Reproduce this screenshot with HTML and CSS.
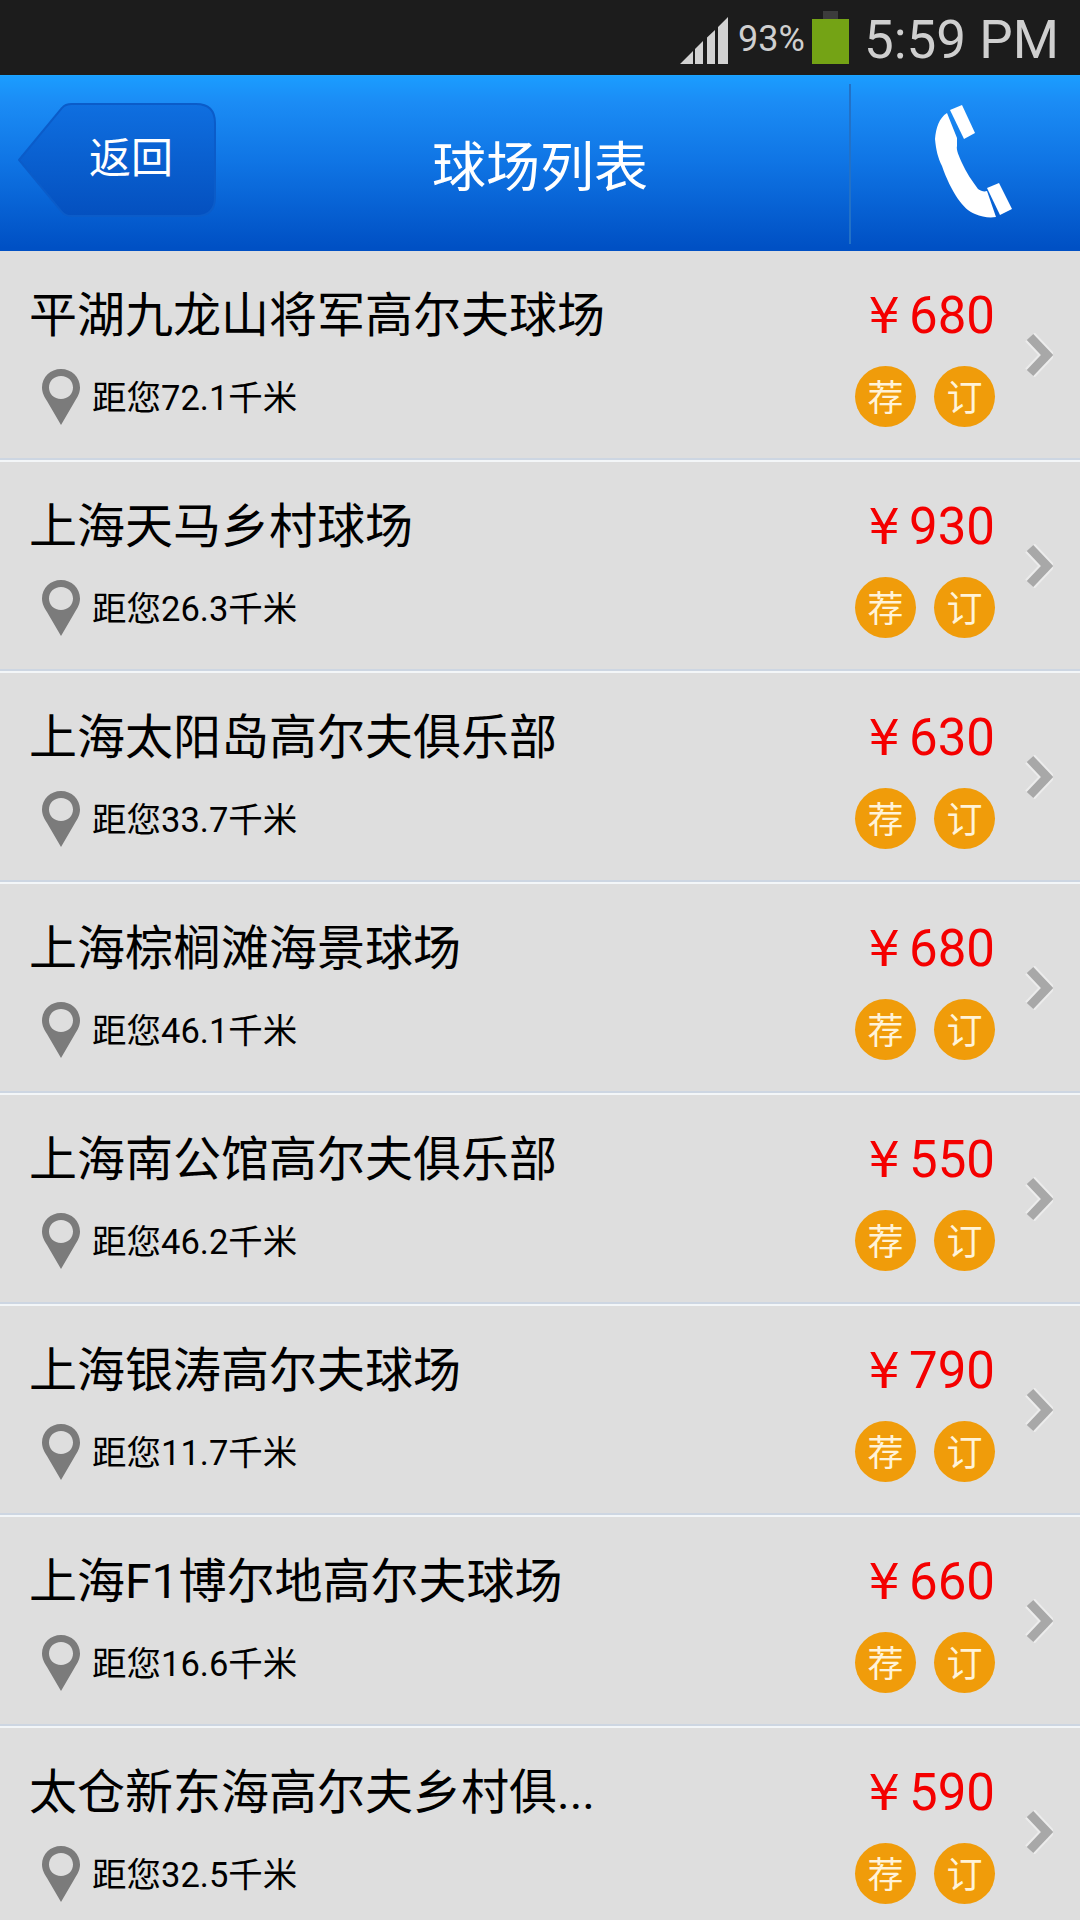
FILE: index.html
```html
<!DOCTYPE html>
<html lang="zh-CN">
<head>
    <meta charset="UTF-8">
    <meta name="viewport" content="width=device-width, initial-scale=1.0">
    <title>球场列表</title>
    <link rel="stylesheet" href="styles.css">
</head>
<body>
    <svg class="defs" width="0" height="0">
        <defs>
            <symbol id="pin" viewBox="0 0 38 56">
                <path fill-rule="evenodd" fill="#7b7b7b" d="M19 0C8.500 0 0 8 0 18.500C0 24 2.500 28 5 32L19 56L33 32C35.500 28 38 24 38 18.500C38 8 29.500 0 19 0ZM19 7C26 7 31 12 31 18.500C31 25 26 30 19 30C12 30 7 25 7 18.500C7 12 12 7 19 7Z"/>
            </symbol>
            <symbol id="chevron" viewBox="0 0 32 44">
                <path d="M9 4L26 22L9 40" fill="none" stroke="#ececec" stroke-width="13"/>
                <path d="M9 4L26 22L9 40" fill="none" stroke="#a8a8a8" stroke-width="9"/>
            </symbol>
        </defs>
    </svg>

    <!-- Statusleiste -->
    <div class="statusbar">
        <svg class="signal" width="50" height="48" viewBox="0 0 50 48">
            <path fill="#d2d2d2" d="M0 48L13 35V48ZM15 33L23 25V48H15ZM27 21.500L35 14V48H27ZM38 11L48 1V48H38Z"/>
        </svg>
        <span class="battery-text">93%</span>
        <div class="battery">
            <div class="battery-cap"></div>
            <div class="battery-body"></div>
        </div>
        <span class="clock">5:59 PM</span>
    </div>

    <!-- Kopfzeile -->
    <div class="header">
        <div class="back">
            <svg class="back-shape" width="198" height="114" viewBox="0 0 198 114">
                <defs>
                    <linearGradient id="backfill" x1="0" y1="0" x2="0" y2="1">
                        <stop offset="0" stop-color="#0f6fe0"/>
                        <stop offset="1" stop-color="#0450bf"/>
                    </linearGradient>
                </defs>
                <path fill="url(#backfill)" stroke="#0b5cc9" stroke-width="2" d="M1 57L44 5Q47 1 54 1H178Q197 1 197 20V94Q197 113 178 113H54Q47 113 44 109Z"/>
            </svg>
            <span class="back-label">返回</span>
        </div>
        <div class="header-title">球场列表</div>
        <div class="phone">
            <svg width="100" height="130" viewBox="0 0 100 130">
                <path fill="#fff" d="M25 14L37 9L50 37L39 43Z"/>
                <path fill="#fff" d="M62 92L74 87L87 113L75 119Z"/>
                <path fill="#fff" d="M22 17C14 22 11 32 10 43C11 54 13 62 17 70C21 82 27 94 33 103C38 110 44 116 50 118C57 121 64 122 71 121L62 95C59 96 56 95 53 93C47 85 41 76 37 67C34 60 31 54 32 50C32 47 32 44 32 42Z"/>
            </svg>
        </div>
    </div>

    <!-- Liste -->
    <div class="list">
        <div class="row">
            <div class="info">
                <div class="name">平湖九龙山将军高尔夫球场</div>
                <div class="distance"><svg class="pin"><use href="#pin"/></svg>距您72.1千米</div>
            </div>
            <div class="side">
                <div class="price"><span class="yen">¥</span><span class="amount">680</span></div>
                <div class="badges"><span class="badge">荐</span><span class="badge">订</span></div>
            </div>
            <svg class="chevron"><use href="#chevron"/></svg>
        </div>
        <div class="row">
            <div class="info">
                <div class="name">上海天马乡村球场</div>
                <div class="distance"><svg class="pin"><use href="#pin"/></svg>距您26.3千米</div>
            </div>
            <div class="side">
                <div class="price"><span class="yen">¥</span><span class="amount">930</span></div>
                <div class="badges"><span class="badge">荐</span><span class="badge">订</span></div>
            </div>
            <svg class="chevron"><use href="#chevron"/></svg>
        </div>
        <div class="row">
            <div class="info">
                <div class="name">上海太阳岛高尔夫俱乐部</div>
                <div class="distance"><svg class="pin"><use href="#pin"/></svg>距您33.7千米</div>
            </div>
            <div class="side">
                <div class="price"><span class="yen">¥</span><span class="amount">630</span></div>
                <div class="badges"><span class="badge">荐</span><span class="badge">订</span></div>
            </div>
            <svg class="chevron"><use href="#chevron"/></svg>
        </div>
        <div class="row">
            <div class="info">
                <div class="name">上海棕榈滩海景球场</div>
                <div class="distance"><svg class="pin"><use href="#pin"/></svg>距您46.1千米</div>
            </div>
            <div class="side">
                <div class="price"><span class="yen">¥</span><span class="amount">680</span></div>
                <div class="badges"><span class="badge">荐</span><span class="badge">订</span></div>
            </div>
            <svg class="chevron"><use href="#chevron"/></svg>
        </div>
        <div class="row">
            <div class="info">
                <div class="name">上海南公馆高尔夫俱乐部</div>
                <div class="distance"><svg class="pin"><use href="#pin"/></svg>距您46.2千米</div>
            </div>
            <div class="side">
                <div class="price"><span class="yen">¥</span><span class="amount">550</span></div>
                <div class="badges"><span class="badge">荐</span><span class="badge">订</span></div>
            </div>
            <svg class="chevron"><use href="#chevron"/></svg>
        </div>
        <div class="row">
            <div class="info">
                <div class="name">上海银涛高尔夫球场</div>
                <div class="distance"><svg class="pin"><use href="#pin"/></svg>距您11.7千米</div>
            </div>
            <div class="side">
                <div class="price"><span class="yen">¥</span><span class="amount">790</span></div>
                <div class="badges"><span class="badge">荐</span><span class="badge">订</span></div>
            </div>
            <svg class="chevron"><use href="#chevron"/></svg>
        </div>
        <div class="row">
            <div class="info">
                <div class="name">上海F1博尔地高尔夫球场</div>
                <div class="distance"><svg class="pin"><use href="#pin"/></svg>距您16.6千米</div>
            </div>
            <div class="side">
                <div class="price"><span class="yen">¥</span><span class="amount">660</span></div>
                <div class="badges"><span class="badge">荐</span><span class="badge">订</span></div>
            </div>
            <svg class="chevron"><use href="#chevron"/></svg>
        </div>
        <div class="row">
            <div class="info">
                <div class="name">太仓新东海高尔夫乡村俱...</div>
                <div class="distance"><svg class="pin"><use href="#pin"/></svg>距您32.5千米</div>
            </div>
            <div class="side">
                <div class="price"><span class="yen">¥</span><span class="amount">590</span></div>
                <div class="badges"><span class="badge">荐</span><span class="badge">订</span></div>
            </div>
            <svg class="chevron"><use href="#chevron"/></svg>
        </div>
    </div>
</body>
</html>
```

FILE: styles.css
```css
/* Grundlegende Stile */
* {
    box-sizing: border-box;
    margin: 0;
    padding: 0;
}

body {
    font-family: Roboto, 'Noto Sans CJK SC', sans-serif;
    background-color: #dedede;
    color: #000;
    height: 1920px;
    overflow: hidden;
}

.defs {
    display: block;
    height: 0;
}

/* Statusleiste */
.statusbar {
    height: 75px;
    background-color: #1c1c1c;
    color: #cfcfcf;
    display: flex;
    align-items: center;
    justify-content: flex-end;
    padding-right: 21px;
}

.signal {
    margin-right: 8px;
    margin-top: 4px;
}

.battery-text {
    font-size: 36px;
    margin-top: 2px;
    margin-right: 7px;
}

.battery {
    width: 37px;
    display: flex;
    flex-direction: column;
    align-items: center;
    margin-right: 15px;
}

.battery-cap {
    width: 15px;
    height: 8px;
    background-color: #3c3c3c;
}

.battery-body {
    width: 37px;
    height: 45px;
    background-color: #74a315;
}

.clock {
    font-size: 53px;
    margin-top: 5px;
}

/* Kopfzeile */
.header {
    height: 176px;
    background: linear-gradient(#1b9dff, #1b8cf5 15%, #0f74e4 50%, #0050c4 98%);
    border-top: 1px solid #1aa4ff;
    display: grid;
    grid-template-columns: 229px 1fr 231px;
    align-items: center;
    color: #fff;
}

.back {
    display: grid;
    width: 198px;
    height: 114px;
    margin-left: 18px;
    margin-top: -7px;
}

.back-shape,
.back-label {
    grid-area: 1 / 1;
}

.back-label {
    font-size: 42px;
    line-height: 112px;
    padding-left: 71px;
}

.header-title {
    font-size: 54px;
    padding-left: 2px;
    text-align: center;
}

.phone {
    height: 160px;
    border-left: 2px solid #2371c6;
    display: flex;
    align-items: center;
    justify-content: center;
    padding-left: 19px;
}

.phone svg {
    margin-top: -6px;
}

/* Liste */
.row {
    height: 211px;
    display: flex;
    background-color: #dedede;
    border-bottom: 2px solid #f3f6f8;
    box-shadow: inset 0 -2px 0 #cdd6e2;
    padding-left: 29px;
}

.info {
    flex: 1;
}

.name {
    font-size: 48px;
    line-height: 60px;
    margin-top: 35px;
}

.distance {
    display: flex;
    align-items: center;
    font-size: 34.500px;
    line-height: 56px;
    margin-top: 24px;
    margin-left: 13px;
}

.pin {
    width: 38px;
    height: 56px;
    margin-right: 12px;
    margin-top: -2px;
}

.side {
    width: 140px;
    display: flex;
    flex-direction: column;
    align-items: flex-end;
}

.price {
    color: #f40000;
    font-size: 51px;
    line-height: 60px;
    margin-top: 35px;
}

.yen {
    font-family: 'DejaVu Sans', sans-serif;
    font-size: 50px;
}

.amount {
    margin-left: 9px;
}

.badges {
    display: flex;
    gap: 18px;
    margin-top: 20px;
}

.badge {
    width: 61px;
    height: 61px;
    border-radius: 50%;
    background-color: #f09c0a;
    color: #fff3d8;
    font-size: 36px;
    line-height: 61px;
    padding-top: 3px;
    text-align: center;
}

.chevron {
    width: 32px;
    height: 44px;
    margin: 82px 27px 0 26px;
}
```
